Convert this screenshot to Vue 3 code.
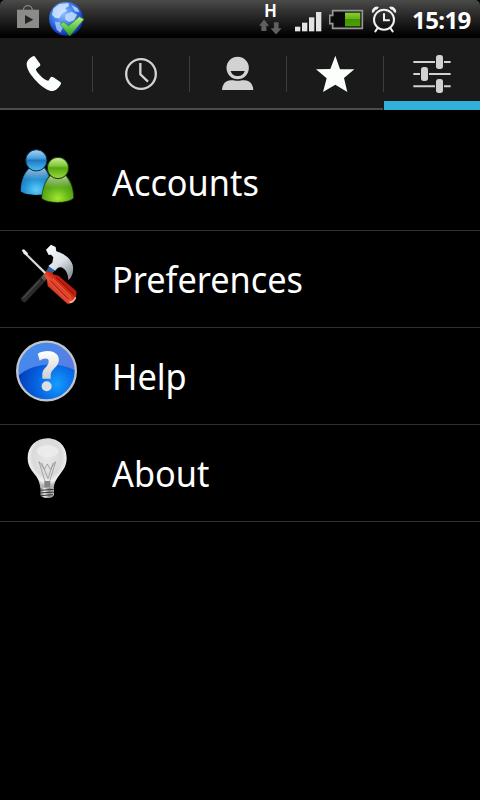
<template>
  <div class="phone-screen">
    <!-- status bar -->
    <header class="status-bar">
      <svg class="market-icon" viewBox="48 9 72 84">
        <path d="M70 32 C70 12 97 12 97 32" fill="none" stroke="#858585" stroke-width="4" />
        <path d="M51 29H117V84H51Z" fill="#8b8b8a" />
        <path d="M75 45L100 59L75 72Z" fill="#252525" />
      </svg>

      <svg class="globe-icon" viewBox="144 0 117 117">
        <defs>
          <radialGradient id="globe" cx="42%" cy="35%" r="62%">
            <stop offset="0" stop-color="#8fc0ff" />
            <stop offset="0.55" stop-color="#3f7fea" />
            <stop offset="1" stop-color="#1230b4" />
          </radialGradient>
          <linearGradient id="check" x1="0" y1="0" x2="0" y2="1">
            <stop offset="0" stop-color="#b8f08a" />
            <stop offset="1" stop-color="#22a51c" />
          </linearGradient>
        </defs>
        <circle cx="198" cy="56" r="51" fill="url(#globe)" />
        <path d="M161 25L178 12L205 9L207 18L196 25L201 33L187 40L178 55L166 54L156 44Z" fill="#d5e9ff" opacity="0.85" />
        <path d="M197 43L215 35L231 44L222 61L207 66L195 58Z" fill="#c5deff" opacity="0.85" />
        <path d="M164 65L181 67L190 80L181 98L170 89Z" fill="#a9cbff" opacity="0.8" />
        <path d="M214 15L232 24L239 37L225 34Z" fill="#dcecff" opacity="0.7" />
        <path d="M180 72L191 66L206 78L238 50L252 58L209 108Z" fill="url(#check)" stroke="#35912c" stroke-width="2" />
      </svg>

      <div class="status-right">
        <div class="network">
          <span class="network-type">H</span>
          <svg class="network-arrows" viewBox="27 58 68 46">
            <path d="M42 59L57 77H49V93H34V77H27Z" fill="#5f5f5f" />
            <path d="M77 103L94 85H85V67H71V85H61Z" fill="#5f5f5f" />
          </svg>
        </div>

        <svg class="signal-icon" viewBox="135 33 81 63">
          <rect
            v-for="(bar, i) in signalBars"
            :key="i"
            :x="bar.x"
            :y="bar.y"
            width="16"
            :height="94 - bar.y"
            fill="#e3e3e3"
          />
        </svg>

        <svg class="battery-icon" viewBox="237 27 105 63">
          <defs>
            <linearGradient id="charge" x1="0" y1="0" x2="0" y2="1">
              <stop offset="0" stop-color="#8ccc38" />
              <stop offset="0.45" stop-color="#62b312" />
              <stop offset="0.5" stop-color="#439500" />
              <stop offset="1" stop-color="#4ba000" />
            </linearGradient>
          </defs>
          <path d="M248 32H337V85H248V71H239V46H248Z" fill="#111" stroke="#989898" stroke-width="5" />
          <path d="M253 38H285V79H253V66H245V51H253Z" fill="#090909" />
          <rect x="285" y="38" width="46" height="41" fill="url(#charge)" />
        </svg>

        <svg class="alarm-icon" viewBox="363 15 78 84">
          <g fill="none" stroke="#f1f1f1" stroke-width="6" stroke-linecap="round">
            <circle cx="402" cy="59" r="30" />
            <path d="M402 42V61H417M383 84L376 94M421 84L428 94" />
          </g>
          <path d="M367 37C366 25 376 19 385 22L381 27C376 28 373 31 371 36Z" fill="#f1f1f1" stroke="#f1f1f1" stroke-width="3" />
          <path d="M437 37C438 25 428 19 419 22L423 27C428 28 431 31 433 36Z" fill="#f1f1f1" stroke="#f1f1f1" stroke-width="3" />
        </svg>

        <span class="clock">15:19</span>
      </div>
    </header>

    <!-- tabs -->
    <nav class="tabs">
      <button
        v-for="tab in tabs"
        :key="tab.id"
        class="tab"
        :class="{ active: activeTab === tab.id }"
        :aria-label="tab.id"
        @click="activeTab = tab.id"
      >
        <svg v-if="tab.id === 'dialer'" class="tab-icon" viewBox="60 36 144 144">
          <path
            d="M101 54C105 54 106 58 108 61L120 77C122 81 121 83 118 85L108 93C106 101 135 129 145 128L151 119C153 116 156 115 160 118L180 131C184 134 184 137 181 141C176 149 168 158 158 159C145 160 127 147 111 131C93 113 79 92 80 77C81 67 92 57 101 54Z"
            fill="#fbfffb"
          />
        </svg>
        <svg v-else-if="tab.id === 'history'" class="tab-icon" viewBox="351 36 144 144">
          <circle cx="423" cy="108" r="44.5" fill="none" stroke="#d2d2d2" stroke-width="7" />
          <path d="M421 75V109L444 131" fill="none" stroke="#d2d2d2" stroke-width="7" />
        </svg>
        <svg v-else-if="tab.id === 'contacts'" class="tab-icon" viewBox="642 36 144 144">
          <path d="M666 156C667 138 678 127 692 127H734C748 127 759 138 760 156Z" fill="#d2d2d2" />
          <circle cx="713" cy="90" r="36" fill="#d2d2d2" stroke="#1a1a1a" stroke-width="5" />
          <path d="M692 99H734C731 110 723 114 713 114C703 114 695 110 692 99Z" fill="#1a1a1a" />
        </svg>
        <svg v-else-if="tab.id === 'favorites'" class="tab-icon" viewBox="213 36 144 144">
          <path d="M286 53L300 94L343 94L312 120L322 162L286 140L249 162L260 121L228 94L271 93Z" fill="#fbfffb" />
        </svg>
        <svg v-else class="tab-icon" viewBox="504 36 144 144">
          <path
            d="M520 72H585M612 72H632M520 108H540M567 108H632M520 145H585M612 145H632"
            stroke="#d2d2d2"
            stroke-width="6"
          />
          <g fill="#d2d2d2">
            <rect x="588" y="51" width="21" height="42" rx="8" />
            <rect x="543" y="87" width="21" height="42" rx="8" />
            <rect x="588" y="123" width="21" height="42" rx="8" />
          </g>
        </svg>
      </button>
    </nav>

    <!-- settings menu -->
    <ul class="menu">
      <li v-for="item in menuItems" :key="item.id" class="menu-item">
        <!-- two people -->
        <svg v-if="item.id === 'accounts'" class="menu-icon" viewBox="45 45 192 192">
          <defs>
            <radialGradient id="blueBody" cx="50%" cy="82%" r="75%">
              <stop offset="0" stop-color="#5ecdf8" />
              <stop offset="0.5" stop-color="#2494d5" />
              <stop offset="1" stop-color="#1768ad" />
            </radialGradient>
            <linearGradient id="blueHead" x1="0" y1="0" x2="0" y2="1">
              <stop offset="0" stop-color="#a8d8f6" />
              <stop offset="0.4" stop-color="#4a9fdc" />
              <stop offset="0.5" stop-color="#1d78c4" />
              <stop offset="1" stop-color="#4cc0f2" />
            </linearGradient>
            <radialGradient id="greenBody" cx="50%" cy="85%" r="75%">
              <stop offset="0" stop-color="#a6e632" />
              <stop offset="0.5" stop-color="#62b31a" />
              <stop offset="1" stop-color="#41860f" />
            </radialGradient>
            <linearGradient id="greenHead" x1="0" y1="0" x2="0" y2="1">
              <stop offset="0" stop-color="#cdf09a" />
              <stop offset="0.4" stop-color="#83c935" />
              <stop offset="0.5" stop-color="#57a613" />
              <stop offset="1" stop-color="#9bdd35" />
            </linearGradient>
            <linearGradient id="shine" x1="0" y1="0" x2="0" y2="1">
              <stop offset="0" stop-color="#fff" stop-opacity="0.6" />
              <stop offset="1" stop-color="#fff" stop-opacity="0" />
            </linearGradient>
          </defs>
          <path d="M90 111C99 120 122 120 132 111C146 126 155 152 156 183C143 198 77 199 62 184C63 153 72 127 90 111Z" fill="url(#blueBody)" />
          <path d="M91 115C101 124 122 123 132 115C141 125 146 140 146 149H70C72 137 80 123 91 115Z" fill="url(#shine)" />
          <circle cx="109" cy="91" r="32" fill="url(#blueHead)" stroke="#0b253c" stroke-width="3" />
          <path d="M153 134C163 144 186 144 196 134C211 148 221 174 221 204C207 221 140 222 125 205C127 176 136 149 153 134Z" fill="url(#greenBody)" stroke="#16350a" stroke-width="2" />
          <path d="M153 138C163 148 186 147 196 138C205 147 211 162 212 173H134C137 160 143 146 153 138Z" fill="url(#shine)" />
          <circle cx="174" cy="114" r="32" fill="url(#greenHead)" stroke="#18380a" stroke-width="3" />
        </svg>

        <!-- hammer and screwdriver -->
        <svg v-else-if="item.id === 'preferences'" class="menu-icon" viewBox="45 36 192 192">
          <defs>
            <linearGradient id="steel" x1="0" y1="0" x2="0.6" y2="1">
              <stop offset="0" stop-color="#fff" />
              <stop offset="0.6" stop-color="#dbe1e6" />
              <stop offset="1" stop-color="#8f989f" />
            </linearGradient>
            <linearGradient id="redGrip" x1="0" y1="1" x2="1" y2="0">
              <stop offset="0.2" stop-color="#a3180d" />
              <stop offset="0.45" stop-color="#ee5135" />
              <stop offset="0.6" stop-color="#c5200f" />
              <stop offset="0.8" stop-color="#971009" />
            </linearGradient>
          </defs>
          <path d="M125 138L138 151L76 217C70 218 61 210 63 204Z" fill="#2b2b2b" />
          <path d="M119 151L69 205" stroke="#4b4b4b" stroke-width="4" />
          <path d="M123 142L151 107L164 120L134 153Z" fill="#55585a" />
          <path d="M150 106L166 119L158 130L142 116Z" fill="#1768b8" />
          <path d="M138 59L153 44L167 51L169 64C184 68 210 80 218 105C222 124 217 139 205 151C205 136 199 119 187 113C177 109 171 115 166 122L145 108L157 98L160 82L153 74L146 75Z" fill="url(#steel)" />
          <path d="M73 66L80 70L140 128L136 134L77 76Z" fill="#d9d9d6" />
          <path d="M65 60L72 58L84 70L81 76L72 73Z" fill="#ecece8" />
          <path d="M132 135C134 126 145 121 156 126L159 133L176 137L229 183C232 203 220 221 203 222L143 168L141 151Z" fill="url(#redGrip)" />
          <path d="M151 152L206 208M168 142L221 192" stroke="#7c1009" stroke-width="3" />
          <path d="M159 147L214 201" stroke="#ff7a5a" stroke-width="3" opacity="0.6" />
          <path d="M207 215Q220 214 225 200L229 203Q222 219 210 220Z" fill="#f4b19e" />
        </svg>

        <!-- question mark -->
        <svg v-else-if="item.id === 'help'" class="menu-icon" viewBox="45 33 192 192">
          <defs>
            <radialGradient id="helpBlue" cx="68%" cy="72%" r="70%">
              <stop offset="0" stop-color="#159cff" />
              <stop offset="0.5" stop-color="#0763e2" />
              <stop offset="1" stop-color="#0538b4" />
            </radialGradient>
            <linearGradient id="helpGloss" x1="0" y1="0" x2="1" y2="0.5">
              <stop offset="0" stop-color="#3b8ff0" />
              <stop offset="1" stop-color="#5a7de2" />
            </linearGradient>
            <linearGradient id="helpMark" x1="0" y1="0" x2="0" y2="1">
              <stop offset="0" stop-color="#fff" />
              <stop offset="1" stop-color="#cfcfcf" />
            </linearGradient>
          </defs>
          <circle cx="139" cy="129" r="88" fill="url(#helpBlue)" />
          <path d="M53 145C54 85 75 43 139 43C192 43 225 86 225 127C172 98 94 105 53 145Z" fill="url(#helpGloss)" />
          <circle cx="139.5" cy="129" r="88" fill="none" stroke="#c4c5c8" stroke-width="7" />
          <path d="M113 77C125 69 146 66 160 72C178 80 180 97 173 109C166 121 152 128 152 141V152H127V139C127 120 145 117 146 101C147 88 131 90 119 98Z" fill="url(#helpMark)" />
          <circle cx="140" cy="175" r="15" fill="#dedede" />
        </svg>

        <!-- light bulb -->
        <svg v-else class="menu-icon" viewBox="45 30 192 192">
          <defs>
            <radialGradient id="bulb" cx="50%" cy="38%" r="58%">
              <stop offset="0" stop-color="#e8e8e8" />
              <stop offset="0.65" stop-color="#dadada" />
              <stop offset="0.85" stop-color="#f2f2f2" />
              <stop offset="1" stop-color="#b4b4b4" />
            </radialGradient>
            <linearGradient id="socket">
              <stop offset="0" stop-color="#777" />
              <stop offset="0.3" stop-color="#eee" />
              <stop offset="0.65" stop-color="#8a8a8a" />
              <stop offset="1" stop-color="#c2c2c2" />
            </linearGradient>
          </defs>
          <path d="M142 37C178 37 201 64 200 98C199 123 187 135 174 153C166 164 163 174 161 186H121C119 172 116 161 108 150C95 133 83 121 83 96C83 62 108 37 142 37Z" fill="url(#bulb)" />
          <path d="M109 76C116 52 168 52 177 76C169 99 117 99 109 76Z" fill="#f0f0f0" opacity="0.7" />
          <path d="M133 184V165H151V184Z" fill="#858585" />
          <path d="M135 166L117 107L133 130L142 114L151 130L167 107L149 166M125 110L144 158L160 110" fill="none" stroke="#888" stroke-width="2" />
          <path d="M121 186H162V207C158 215 151 216 142 216C132 216 125 214 121 207Z" fill="url(#socket)" />
          <path d="M120 193L162 190M120 201L162 198M123 209L159 206" stroke="#363636" stroke-width="3" />
        </svg>

        <span class="menu-label">{{ item.label }}</span>
      </li>
    </ul>
  </div>
</template>

<script setup>
import { ref } from 'vue'

const activeTab = ref('settings')

const tabs = [
  { id: 'dialer' },
  { id: 'history' },
  { id: 'contacts' },
  { id: 'favorites' },
  { id: 'settings' },
]

const menuItems = [
  { id: 'accounts', label: 'Accounts' },
  { id: 'preferences', label: 'Preferences' },
  { id: 'help', label: 'Help' },
  { id: 'about', label: 'About' },
]

// signal strength bars, short to tall
const signalBars = [
  { x: 135, y: 80 },
  { x: 156, y: 68 },
  { x: 177, y: 52 },
  { x: 198, y: 36 },
]
</script>

<style>
body {
  background: #000;
}
</style>

<style scoped>
.phone-screen {
  width: 480px;
  height: 800px;
  overflow: hidden;
  background: #000;
  color: #fff;
  font-family: 'Noto Sans', 'Open Sans', sans-serif;
}

/* status bar */
.status-bar {
  display: flex;
  height: 38px;
  box-sizing: border-box;
  padding-left: 16px;
  border-radius: 5px 5px 0 0;
  background: linear-gradient(#4b4b49 0, #353535 25%, #1a1a1a 60%, #000 95%);
}
.market-icon {
  width: 24px;
  height: 28px;
  margin-top: 3px;
}
.globe-icon {
  width: 39px;
  height: 39px;
  margin-left: 8px;
}
.status-right {
  display: flex;
  align-items: flex-start;
  margin-left: auto;
  padding-right: 9px;
}
.network {
  display: flex;
  flex-direction: column;
  align-items: center;
  width: 23px;
  margin-right: 13px;
  padding-top: 3px;
}
.network-type {
  height: 16px;
  font-family: 'Liberation Sans', sans-serif;
  font-size: 18px;
  font-weight: 700;
  line-height: 16px;
  transform: scaleX(0.92);
}
.network-arrows {
  width: 23px;
  height: 16px;
}
.signal-icon {
  width: 27px;
  height: 21px;
  margin-top: 11px;
}
.battery-icon {
  width: 35px;
  height: 21px;
  margin: 9px 7px 0;
}
.alarm-icon {
  width: 26px;
  height: 28px;
  margin-top: 5px;
}
.clock {
  width: 59px;
  margin-left: 15px;
  font-size: 24px;
  font-weight: 700;
  line-height: 39px;
  letter-spacing: -0.6px;
}

/* tabs */
.tabs {
  display: grid;
  grid-template-columns: 92px repeat(4, 97px);
  height: 72px;
  background: #1a1a1a;
}
.tab {
  display: flex;
  flex-direction: column;
  align-items: center;
  padding: 12px 0 0;
  border: 0;
  border-bottom: 2px solid #4b4b4b;
  background: linear-gradient(#3d3d3d, #3d3d3d) 0 18px / 1px 36px no-repeat;
}
.tab:not(:first-child) {
  padding-left: 1px;
}
.tab:first-child {
  padding-right: 4px;
  background: none;
}
.tab.active {
  border-bottom: 0;
  background:
    linear-gradient(#3d3d3d, #3d3d3d) 0 18px / 1px 36px no-repeat,
    linear-gradient(#33b0da, #33b0da) 1px 63px / 96px 9px no-repeat;
}
.tab-icon {
  width: 48px;
  height: 48px;
}

/* menu */
.menu {
  margin: 0;
  padding: 24px 0 0;
  list-style: none;
}
.menu-item {
  display: flex;
  height: 97px;
  box-sizing: border-box;
  padding: 11px 0 0 15px;
  border-bottom: 1px solid #303030;
}
.menu-icon {
  flex: none;
  width: 64px;
  height: 64px;
}
/* slightly condensed label */
.menu-label {
  margin-left: 33px;
  font-size: 36px;
  line-height: 75px;
  transform: scaleX(0.953);
  transform-origin: left center;
}
</style>
